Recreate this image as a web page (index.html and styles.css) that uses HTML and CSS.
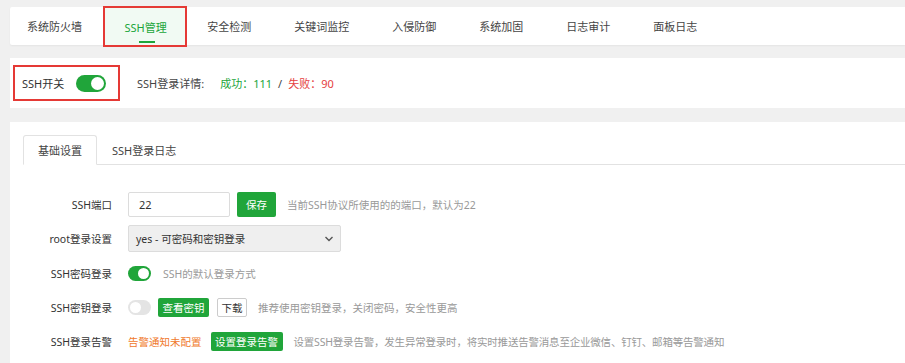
FILE: index.html
```html
<!DOCTYPE html>
<html lang="zh">
<head>
<meta charset="utf-8">
<title>SSH管理</title>
<link rel="stylesheet" href="styles.css">
</head>
<body>
<div class="page">
  <nav class="topnav">
    <span class="ttab first">系统防火墙</span>
    <span class="ttab active">SSH管理</span>
    <span class="ttab">安全检测</span>
    <span class="ttab">关键词监控</span>
    <span class="ttab">入侵防御</span>
    <span class="ttab">系统加固</span>
    <span class="ttab">日志审计</span>
    <span class="ttab">面板日志</span>
  </nav>

  <section class="statusbar">
    <div class="switchbox">
      <span>SSH开关</span>
      <span class="toggle on big"></span>
    </div>
    <div class="detail">
      <span class="dlabel">SSH登录详情:</span>
      <span class="ok">成功：111</span>
      <span class="slash">/</span>
      <span class="fail">失败：90</span>
    </div>
  </section>

  <section class="panel">
    <div class="subtabs">
      <span class="stab active">基础设置</span>
      <span class="stab">SSH登录日志</span>
    </div>
    <div class="form">
      <div class="row">
        <label class="lbl">SSH端口</label>
        <input class="inp" type="text" value="22">
        <button class="btn save">保存</button>
        <span class="help">当前SSH协议所使用的的端口，默认为22</span>
      </div>
      <div class="row">
        <label class="lbl">root登录设置</label>
        <div class="select">
          <span>yes - 可密码和密钥登录</span>
          <svg class="chev" width="10" height="6" viewBox="0 0 10 6"><path d="M1.5 1 L5 4.5 L8.5 1" fill="none" stroke="#555" stroke-width="1.4"/></svg>
        </div>
      </div>
      <div class="row">
        <label class="lbl">SSH密码登录</label>
        <span class="toggle on"></span>
        <span class="help">SSH的默认登录方式</span>
      </div>
      <div class="row">
        <label class="lbl">SSH密钥登录</label>
        <span class="toggle off"></span>
        <button class="btn sm green">查看密钥</button>
        <button class="btn sm plain">下载</button>
        <span class="help">推荐使用密钥登录，关闭密码，安全性更高</span>
      </div>
      <div class="row">
        <label class="lbl">SSH登录告警</label>
        <span class="warn">告警通知未配置</span>
        <button class="btn sm green wide">设置登录告警</button>
        <span class="help tight">设置SSH登录告警，发生异常登录时，将实时推送告警消息至企业微信、钉钉、邮箱等告警通知</span>
      </div>
    </div>
  </section>
</div>
</body>
</html>
```

FILE: styles.css
```css
* { box-sizing: border-box; }
html, body {
  margin: 0;
  padding: 0;
  background: #f0f0f0;
  font-family: "Noto Sans", "Noto Sans CJK SC", sans-serif;
  font-size: 11px;
  color: #333;
  overflow: hidden;
}
.page {
  padding: 7px 0 0 10px;
  height: 363px;
  overflow: hidden;
}
.topnav {
  display: flex;
  align-items: stretch;
  height: 38px;
  background: #fff;
  border-radius: 2px 0 0 2px;
  box-shadow: 0 1px 2px rgba(0,0,0,0.05);
}
.ttab {
  display: flex;
  align-items: center;
  padding: 0 21.5px;
  color: #444;
  position: relative;
}
.ttab.first { padding-left: 17px; }
.ttab.active {
  color: #20a53a;
  background: #f1faf3;
  outline: 2px solid #e53935;
  outline-offset: -1px;
  height: 39px;
  padding: 0 19px 0 21px;
}
.ttab.active::after {
  content: "";
  position: absolute;
  left: 50%;
  bottom: 3px;
  width: 16px;
  margin-left: -6px;
  height: 2px;
  background: #20a53a;
}
.statusbar {
  margin-top: 13px;
  height: 50px;
  background: #fff;
  display: flex;
  align-items: center;
  padding-left: 3px;
}
.switchbox {
  display: flex;
  align-items: center;
  height: 36px;
  width: 107px;
  border: 2px solid #e53935;
  padding-left: 7px;
  gap: 12px;
}
.detail {
  margin-left: 17px;
  display: flex;
  align-items: center;
}
.dlabel { color: #444; margin-right: 16px; }
.ok { color: #20a53a; }
.slash { margin: 0 6px; color: #444; }
.fail { color: #e53e3e; }

.toggle {
  display: inline-block;
  position: relative;
  width: 23px;
  height: 15px;
  border-radius: 8px;
  flex: none;
}
.toggle.big { width: 30px; height: 17px; border-radius: 9px; }
.toggle.on { background: #20a53a; }
.toggle.off { background: #e4e4e4; }
.toggle::after {
  content: "";
  position: absolute;
  top: 2px;
  width: 11px;
  height: 11px;
  border-radius: 50%;
  background: #fff;
}
.toggle.big::after { width: 13px; height: 13px; top: 2px; }
.toggle.on::after { right: 2px; }
.toggle.off::after { left: 2px; }

.panel {
  margin-top: 14px;
  background: #fff;
  height: 241px;
  padding: 13px 0 0 13px;
}
.subtabs {
  display: flex;
  height: 30px;
  border-bottom: 1px solid #e2e2e2;
}
.stab {
  display: flex;
  align-items: center;
  padding: 0 15px;
  color: #444;
  margin-bottom: -1px;
  white-space: nowrap;
}
.stab.active {
  border: 1px solid #e2e2e2;
  border-bottom-color: #fff;
  border-radius: 3px 3px 0 0;
  background: #fff;
  padding: 0 14px;
}
.form { padding-top: 22px; font-size: 10.5px; }
.row {
  display: flex;
  align-items: center;
  height: 34px;
}
.row:nth-child(2) { height: 35px; }
.lbl {
  width: 89px;
  text-align: right;
  margin-right: 16px;
  color: #333;
  flex: none;
  white-space: nowrap;
}
.inp {
  width: 102px;
  height: 25px;
  border: 1px solid #dcdcdc;
  border-radius: 2px;
  padding: 0 10px;
  font: inherit;
  font-size: 11px;
  color: #333;
  outline: none;
}
.btn {
  font: inherit;
  border: none;
  cursor: pointer;
  padding: 0;
  border-radius: 2px;
  white-space: nowrap;
}
.save {
  margin-left: 7px;
  width: 39px;
  height: 25px;
  background: #20a53a;
  color: #fff;
}
.help {
  color: #999;
  margin-left: 11px;
  white-space: nowrap;
}
.help.tight { letter-spacing: -0.2px; }
.select {
  width: 213px;
  height: 27px;
  background: #efefef;
  border: 1px solid #dcdcdc;
  border-radius: 2px;
  display: flex;
  align-items: center;
  justify-content: space-between;
  padding: 0 0 0 7px;
  color: #333;
}
.chev { margin-right: 6px; }
.sm { height: 19px; }
.green { background: #20a53a; color: #fff; padding: 0 5px; }
.toggle + .green { margin-left: 7px; width: 51px; padding: 0; }
.plain {
  background: #fff;
  border: 1px solid #ccc;
  color: #333;
  width: 30px;
  margin-left: 8px;
}
.warn { color: #f07a2d; }
.green.wide { margin-left: 9px; width: 72px; padding: 0; }
.row .toggle + .help { margin-left: 12px; }
```
